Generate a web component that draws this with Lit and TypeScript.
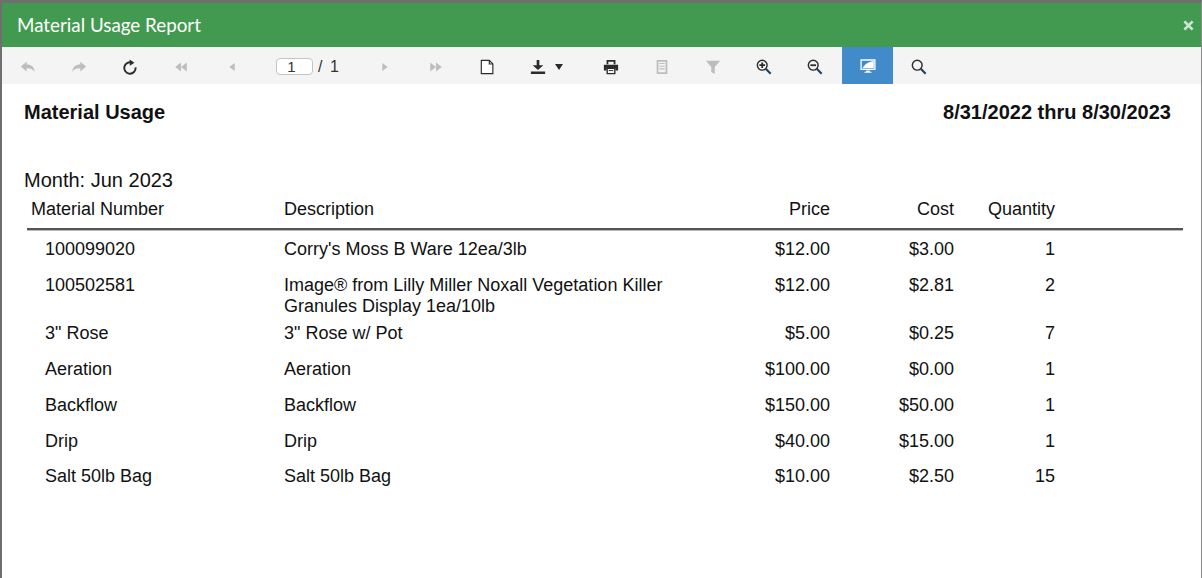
import { LitElement, html, css, svg } from "lit";
import { customElement } from "lit/decorators.js";

const ic = (body: unknown, cls = "") => html`<svg class="ic ${cls}" width="16" height="16" viewBox="0 0 18 18">${body}</svg>`;

const D = "#bdbdbd";
const K = "#2b2b2b";

const icons = {
  back: ic(svg`<path fill="${D}" d="M1 8.500 7.500 3v3.200c5 0 8.600 2.600 9 8.300-1.700-3.100-4.400-4.100-9-4.100V14z"/>`),
  fwd: ic(svg`<path fill="${D}" d="M17 8.500 10.500 3v3.200c-5 0-8.600 2.600-9 8.300 1.700-3.100 4.400-4.100 9-4.100V14z"/>`),
  refresh: ic(svg`<path fill="none" stroke="${K}" stroke-width="2.200" d="M11.600 4.300A6.400 6.400 0 1 0 15.300 9.500"/><path fill="${K}" d="M8.500 .5 14 4.300 8.800 7.500z"/>`),
  first: ic(svg`<path fill="${D}" d="M9 4v10L2.500 9zM15.500 4v10L9 9z"/>`),
  prev: ic(svg`<path fill="${D}" d="M12 4.500v9L6 9z"/>`),
  next: ic(svg`<path fill="${D}" d="M6 4.500v9l6-4.500z"/>`),
  last: ic(svg`<path fill="${D}" d="M2.500 4v10L9 9zM9 4v10l6.500-5z"/>`),
  page: ic(svg`<path fill="#fff" stroke="${K}" stroke-width="1.300" d="M2.600 1.600h9l4 4v10.800h-13z"/><path fill="none" stroke="${K}" stroke-width="1.300" d="M11.600 1.600v4h4"/>`),
  down: ic(svg`<path fill="${K}" d="M7.500 1h3v6H15l-6 5.500L3 7h4.500zM1 14h16v3H1z"/>`),
  print: ic(svg`<path fill="${K}" d="M4 1h10v5h-2V3H6v3H4zM1 6.500h16V13h-3v-2.500H4V13H1z"/><path fill="none" stroke="${K}" stroke-width="1.500" d="M4.700 10.500h8.600v6H4.700z"/><path fill="${K}" d="M6.500 12.500h5v1h-5z"/>`),
  doc: ic(svg`<path fill="${D}" fill-rule="evenodd" d="M3 1h12v16H3zM5 3v12h8V3z"/><path fill="${D}" d="M6 4.500h6v1.200H6zM6 7.500h6v1.200H6zM6 10.500h6v1.200H6z"/>`),
  filter: ic(svg`<path fill="${D}" d="M1 2h16l-6 7v8l-4-2.500V9z"/>`),
  zin: ic(svg`<circle cx="7" cy="7" r="5.500" fill="none" stroke="${K}" stroke-width="1.600"/><path stroke="#1d3f66" stroke-width="2.400" d="m11 11 5.500 5.500"/><path fill="${K}" d="M6 3.800h2v2.200h2.200v2H8v2.200H6V8H3.800V6H6z"/>`),
  zout: ic(svg`<circle cx="7" cy="7" r="5.500" fill="none" stroke="${K}" stroke-width="1.600"/><path stroke="#1d3f66" stroke-width="2.400" d="m11 11 5.500 5.500"/><path fill="${K}" d="M3.800 6h6.400v2H3.800z"/>`),
  screen: ic(svg`<path fill="#fff" fill-rule="evenodd" d="M.5 1.500h17v12H.5zM2 3v9h14V3z"/><path fill="#fff" d="M3 11.500c2-4 6-6.800 12.500-8V11.500zM7 14h4v1.500h2v1H5v-1h2z"/>`),
  search: ic(svg`<circle cx="7" cy="7" r="5.500" fill="none" stroke="${K}" stroke-width="1.600"/><path stroke="#1d3f66" stroke-width="2.400" d="m11 11 5.500 5.500"/>`),
};

const rows = [
  ["100099020", ["Corry's Moss B Ware 12ea/3lb"], "$12.00", "$3.00", "1", ""],
  ["100502581", ["Image® from Lilly Miller Noxall Vegetation Killer", "Granules Display 1ea/10lb"], "$12.00", "$2.81", "2", "tall"],
  ['3" Rose', ['3" Rose w/ Pot'], "$5.00", "$0.25", "7", ""],
  ["Aeration", ["Aeration"], "$100.00", "$0.00", "1", ""],
  ["Backflow", ["Backflow"], "$150.00", "$50.00", "1", ""],
  ["Drip", ["Drip"], "$40.00", "$15.00", "1", "short"],
  ["Salt 50lb Bag", ["Salt 50lb Bag"], "$10.00", "$2.50", "15", ""],
] as const;

@customElement("app-root")
export class AppRoot extends LitElement {
  static styles = css`
    :host {
      display: block;
      width: 1202px;
      height: 578px;
      box-sizing: border-box;
      overflow: hidden;
      background: #fff;
      border-top: 3px solid #6f6f6f;
      border-left: 2px solid #6f6f6f;
      border-right: 1px solid #8a8a8a;
      font-family: "Liberation Sans", Arial, sans-serif;
      color: #111;
    }
    .head {
      height: 42px;
      padding: 0 7px 2px 15px;
      background: #429a50;
      display: flex;
      align-items: center;
      justify-content: space-between;
      color: #fff;
      font-family: Lato, sans-serif;
      font-size: 18.800px;
    }
    .close { width: 11px; height: 11px; display: block; margin-top: 2px; }
    .tools {
      height: 35px;
      padding-top: 2px;
      background: #f4f4f4;
      display: flex;
      align-items: stretch;
    }
    .b { width: 51px; display: flex; align-items: center; justify-content: center; flex: none; }
    .b.on { background: #428bca; margin-top: -2px; }
    .b.zo { margin-right: 2px; }
    .b.dl { width: 73px; gap: 9px; padding-right: 4px; box-sizing: border-box; }
    .b.pg { width: 102px; gap: 5px; justify-content: flex-start; padding-left: 19px; box-sizing: border-box; font-size: 16px; color: #333; word-spacing: 3px; }
    .ic { display: block; flex: none; }
    .caret { width: 0; height: 0; border: 4px solid transparent; border-top: 6px solid #2b2b2b; border-bottom: 0; }
    .pgbox {
      width: 35px; height: 15px; flex: none;
      border: 1px solid #c4c4c4; border-radius: 4px; background: #fff;
      font-size: 15px; line-height: 15px; text-align: center;
      text-indent: -6px;
    }
    .report { padding: 17px 30px 0 22px; }
    .top { display: flex; justify-content: space-between; font-weight: 700; font-size: 20px; line-height: 23px; }
    .month { font-size: 20px; line-height: 23px; margin-top: 45px; }
    .grid {
      display: grid;
      grid-template-columns: 253px 412px 134px 124px 101px;
      font-size: 18px;
      line-height: 21px;
      margin: 7px 0 0 7px;
    }
    .hd { display: contents; }
    .hd > div { padding: 0 0 8px 0; }
    .rule { grid-column: 1 / -1; }
    .line { height: 3px; margin: 0 0 8px -4px; width: 1156px; background: linear-gradient(#555 0 2px, #bbb 2px 3px); }
    .r { text-align: right; }
    .row { display: contents; }
    .row > div { height: 36px; }
    .row.tall > div { height: 48px; }
    .row.short > div { height: 35px; }
    .first { padding-left: 14px; }
  `;

  render() {
    return html`
      <div class="head">
        <span>Material Usage Report</span>
        <svg class="close" viewBox="0 0 12 12"><path stroke="#cfe5d3" stroke-width="3" d="M1.500 1.500l9 9M10.500 1.500l-9 9"/></svg>
      </div>
      <div class="tools">
        <div class="b">${icons.back}</div>
        <div class="b">${icons.fwd}</div>
        <div class="b">${icons.refresh}</div>
        <div class="b">${icons.first}</div>
        <div class="b">${icons.prev}</div>
        <div class="b pg"><span class="pgbox">1</span><span>/ 1</span></div>
        <div class="b">${icons.next}</div>
        <div class="b">${icons.last}</div>
        <div class="b">${icons.page}</div>
        <div class="b dl">${icons.down}<span class="caret"></span></div>
        <div class="b">${icons.print}</div>
        <div class="b">${icons.doc}</div>
        <div class="b">${icons.filter}</div>
        <div class="b">${icons.zin}</div>
        <div class="b zo">${icons.zout}</div>
        <div class="b on">${icons.screen}</div>
        <div class="b">${icons.search}</div>
      </div>
      <div class="report">
        <div class="top"><span>Material Usage</span><span>8/31/2022 thru 8/30/2023</span></div>
        <div class="month">Month: Jun 2023</div>
        <div class="grid">
          <div class="hd">
            <div>Material Number</div><div>Description</div><div class="r">Price</div><div class="r">Cost</div><div class="r">Quantity</div>
          </div>
          <div class="rule"><div class="line"></div></div>
          ${rows.map(
            (r) => html`<div class="row ${r[5]}">
              <div class="first">${r[0]}</div>
              <div>${r[1].map((l) => html`<div>${l}</div>`)}</div>
              <div class="r">${r[2]}</div>
              <div class="r">${r[3]}</div>
              <div class="r">${r[4]}</div>
            </div>`
          )}
        </div>
      </div>
    `;
  }
}
